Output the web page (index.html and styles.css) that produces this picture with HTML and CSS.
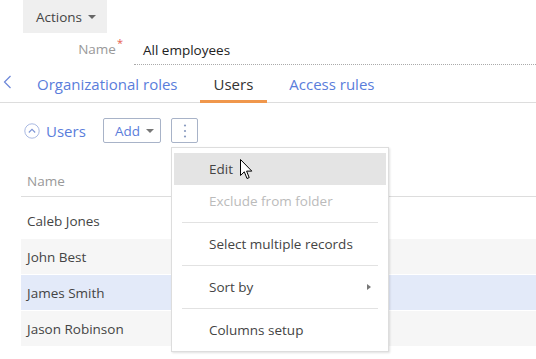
FILE: index.html
```html
<!DOCTYPE html>
<html>
<head>
<meta charset="utf-8">
<link rel="stylesheet" href="styles.css">
</head>
<body>
<div class="page">
  <div class="toolbar">
    <div class="btn-actions">Actions <span class="caret"></span></div>
  </div>
  <div class="field">
    <div class="field-label">Name<span class="req">*</span></div>
    <div class="field-value">All employees</div>
  </div>
  <div class="tabs">
    <div class="tab-back"><svg width="9" height="14" viewBox="0 0 9 14"><path d="M7.5 1 L1.5 7 L7.5 13" fill="none" stroke="#6b86d8" stroke-width="1.2"/></svg></div>
    <div class="tab">Organizational roles</div>
    <div class="tab active">Users</div>
    <div class="tab">Access rules</div>
  </div>
  <div class="detail-head">
    <div class="collapse">
      <svg width="16" height="16" viewBox="0 0 16 16"><circle cx="8" cy="8" r="7.2" fill="none" stroke="#a9b9e2" stroke-width="1"/><path d="M4.8 9.5 L8 6.3 L11.2 9.5" fill="none" stroke="#7d95d6" stroke-width="1.1"/></svg>
      <span class="detail-title">Users</span>
    </div>
    <div class="btn-add">Add <span class="caret"></span></div>
    <div class="btn-more"><svg width="4" height="16" viewBox="0 0 4 16"><circle cx="2" cy="2.5" r="1.1" fill="#8a9bc0"/><circle cx="2" cy="8" r="1.1" fill="#8a9bc0"/><circle cx="2" cy="13.5" r="1.1" fill="#8a9bc0"/></svg></div>
  </div>
  <div class="grid">
    <div class="grid-header">Name</div>
    <div class="grid-rows">
      <div class="row">Caleb Jones</div>
      <div class="row alt">John Best</div>
      <div class="row selected">James Smith</div>
      <div class="row alt">Jason Robinson</div>
    </div>
  </div>

  <div class="menu">
    <div class="menu-item hover">Edit</div>
    <div class="menu-item disabled">Exclude from folder</div>
    <div class="menu-sep"></div>
    <div class="menu-item">Select multiple records</div>
    <div class="menu-sep"></div>
    <div class="menu-item has-sub">Sort by<span class="sub-arrow"></span></div>
    <div class="menu-sep"></div>
    <div class="menu-item">Columns setup</div>
  </div>

  <svg class="cursor" width="13" height="21" viewBox="0 0 13 21"><path d="M0.5 0.5 L0.5 16.5 L4.3 12.8 L7 19.5 L9.2 18.6 L6.6 12.1 L11.8 12.1 Z" fill="#fff" stroke="#000" stroke-width="1" stroke-linejoin="miter"/></svg>
</div>
</body>
</html>
```

FILE: styles.css
```css
* { box-sizing: border-box; }
html, body { margin: 0; padding: 0; background: #fff; }
body {
  font-family: "Open Sans", "Noto Sans", sans-serif;
  font-size: 13.5px;
  color: #444;
  width: 536px;
  height: 359px;
  overflow: hidden;
}
.page { position: relative; width: 536px; height: 359px; }

.toolbar { padding-left: 23px; height: 33px; }
.btn-actions {
  width: 84px; height: 33px;
  background: #efefef;
  display: flex; align-items: center;
  padding-left: 13px;
  font-size: 13.5px; color: #444;
}
.caret {
  display: inline-block; width: 0; height: 0;
  border-left: 4px solid transparent; border-right: 4px solid transparent;
  border-top: 4px solid #666;
  margin-left: 6px; margin-top: 1px;
}

.field { display: flex; height: 32px; align-items: stretch; }
.field-label {
  width: 130px; text-align: right; color: #999;
  padding-right: 7px; padding-top: 7px; font-size: 13.5px;
}
.req { color: #e65c4f; font-size: 11px; position: relative; top: -7px; margin-left: 1px; }
.field-value {
  flex: 1; margin-left: 4px;
  border-bottom: 1px dotted #aaa;
  padding-left: 9px; padding-top: 8px; color: #222; font-size: 13.5px;
}

.tabs {
  display: flex; height: 38px; align-items: stretch;
  border-bottom: 1px solid #ddd;
}
.tab-back { width: 23px; display: flex; align-items: center; padding-left: 3px; padding-bottom: 3px; }
.tab {
  font-size: 15px; color: #5a7ddb;
  padding: 9px 14px 0; margin-right: 8px;
  border-bottom: 3px solid transparent;
}
.tab.active { color: #333; border-bottom-color: #f0974c; margin-bottom: -1px; }

.detail-head {
  display: flex; align-items: center;
  padding-left: 24px; margin-top: 15px; height: 25px;
}
.collapse { display: flex; align-items: center; gap: 6px; width: 79px; }
.detail-title { font-size: 15px; color: #5a7ddb; }
.btn-add {
  width: 58px; height: 25px; border: 1px solid #a8b3c8; border-radius: 2px;
  display: flex; align-items: center; padding-left: 11px;
  color: #5a7ddb; font-size: 13.5px;
}
.btn-add .caret { border-top-color: #777; margin-left: 6px; }
.btn-more {
  width: 27px; height: 25px; border: 1px solid #a8b3c8; border-radius: 2px;
  margin-left: 10px;
  display: flex; align-items: center; justify-content: center;
}

.grid { margin-left: 21px; margin-top: 29px; }
.grid-header {
  height: 25px; padding-left: 6px; color: #999; font-size: 13.5px;
  border-bottom: 1px solid #ddd;
}
.grid-rows { padding-top: 6px; }
.row {
  height: 36px; display: flex; align-items: center; padding-left: 6px;
  color: #444; font-size: 13.5px;
  border-bottom: 1px solid #fff;
}
.row.alt { background: #f6f6f6; }
.row.selected { background: #e3eaf9; }

.menu {
  position: absolute; left: 171px; top: 147px; width: 218px;
  background: #fff; border: 1px solid #ddd;
  box-shadow: 1px 1px 2px rgba(0,0,0,0.12);
  padding: 5px 2px 5px 2px;
}
.menu-item {
  height: 32px; display: flex; align-items: center;
  padding-left: 35px; color: #444; font-size: 13.5px;
  position: relative;
}
.menu-item.hover { background: #e4e4e4; }
.menu-item.disabled { color: #bbb; }
.menu-sep { height: 1px; background: #e2e2e2; margin: 5px 8px 5px; }
.menu-sep + .menu-item { margin-top: 1px; }
.sub-arrow {
  position: absolute; right: 15px; top: 13px;
  width: 0; height: 0;
  border-top: 3.5px solid transparent; border-bottom: 3.5px solid transparent;
  border-left: 4px solid #777;
}
.cursor { position: absolute; left: 240px; top: 159px; }
```
